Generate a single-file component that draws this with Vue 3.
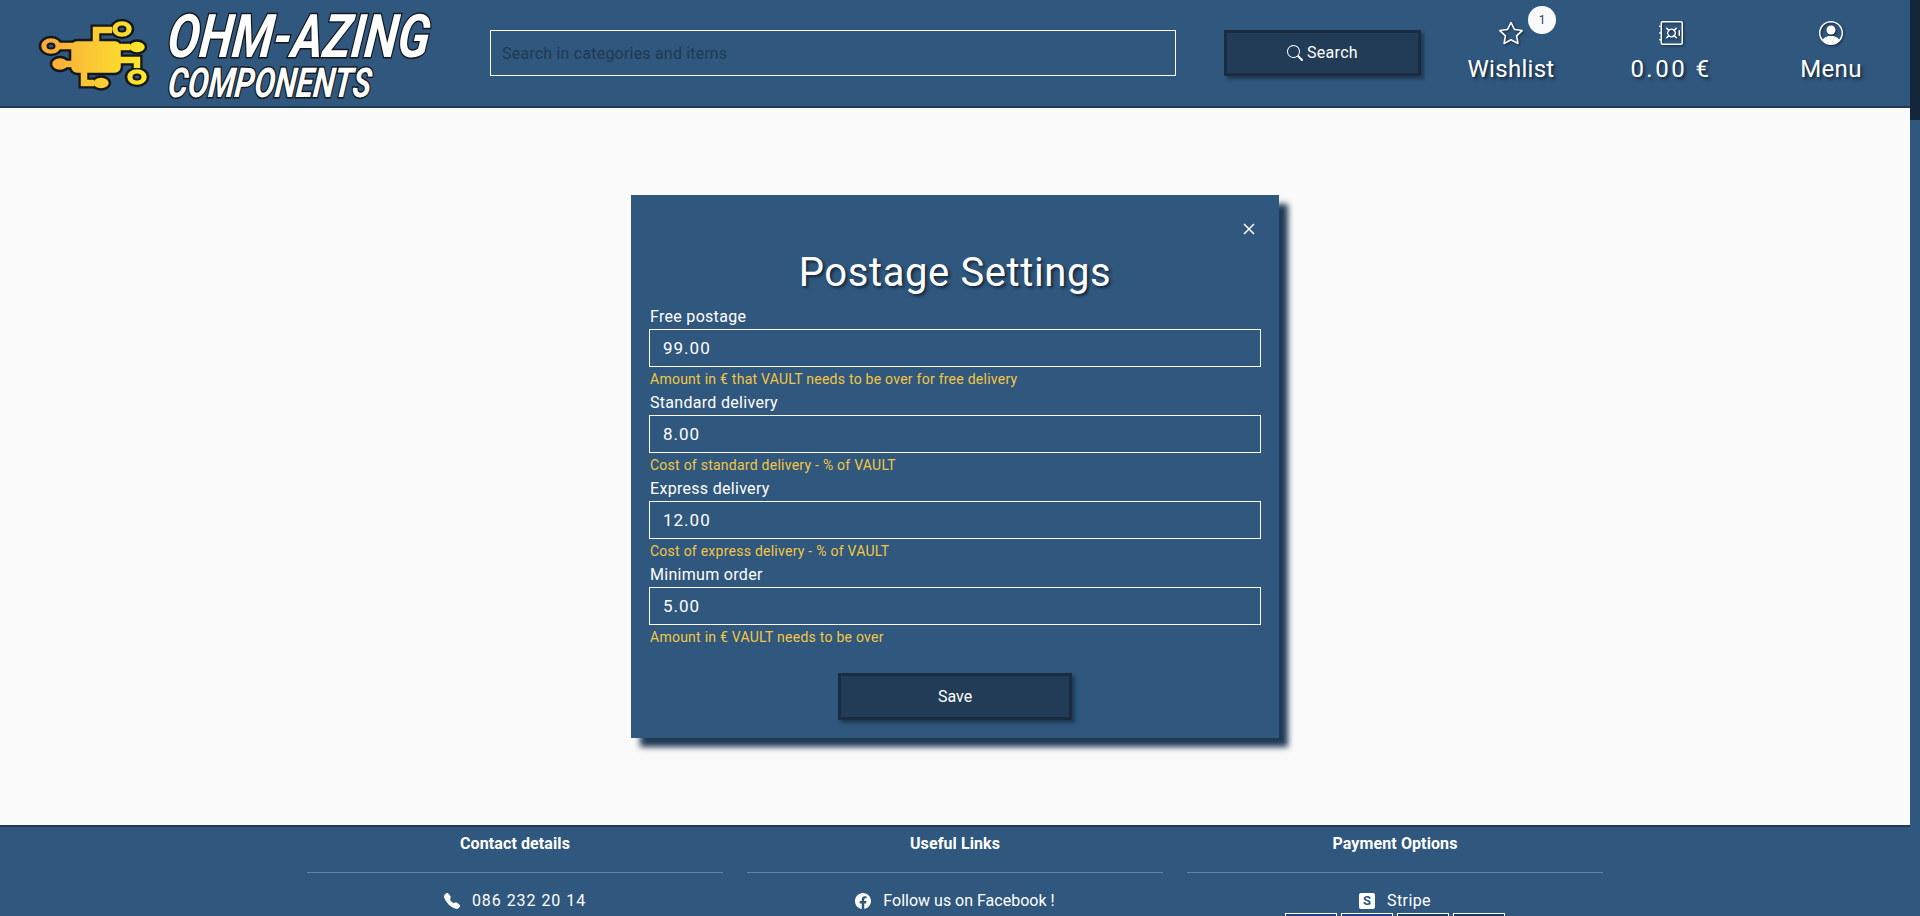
<script setup>
const fields = [
  { label: 'Free postage', value: '99.00', help: 'Amount in € that VAULT needs to be over for free delivery' },
  { label: 'Standard delivery', value: '8.00', help: 'Cost of standard delivery - % of VAULT' },
  { label: 'Express delivery', value: '12.00', help: 'Cost of express delivery - % of VAULT' },
  { label: 'Minimum order', value: '5.00', help: 'Amount in € VAULT needs to be over' },
]
</script>

<template>
  <div class="root">
    <div class="page">
      <header class="topbar">
        <svg class="logo" viewBox="0 0 490 106" width="490" height="106">
          <defs>
            <linearGradient id="chip" gradientUnits="userSpaceOnUse" x1="42" y1="0" x2="146" y2="0">
              <stop offset="0" stop-color="#f9a83c" />
              <stop offset="1" stop-color="#fde92b" />
            </linearGradient>
          </defs>
          <g fill="none" stroke="#14171c" stroke-width="11">
            <path d="M96 42V30H112M60 46H74M122 47H130M122 60H137V68M84 72V83H94M62 64H72" />
          </g>
          <g fill="url(#chip)" stroke="#14171c" stroke-width="2.5">
            <ellipse cx="122" cy="29" rx="11" ry="9" />
            <ellipse cx="51" cy="46" rx="11" ry="9" />
            <ellipse cx="60" cy="64" rx="9" ry="7" />
            <ellipse cx="137" cy="47" rx="9" ry="6.5" />
            <ellipse cx="137" cy="77" rx="11" ry="9" />
            <ellipse cx="101" cy="83" rx="9" ry="6.5" />
            <rect x="70" y="40" width="52" height="34" rx="7" />
          </g>
          <g fill="none" stroke="url(#chip)" stroke-width="6.5">
            <path d="M96 44V30H112M60 46H76M120 47H130M118 60H137V68M84 70V83H94M62 64H74" />
          </g>
          <g fill="#30577d" stroke="#14171c" stroke-width="2">
            <ellipse cx="122" cy="29" rx="3.5" ry="2.5" />
            <ellipse cx="51" cy="46" rx="3.5" ry="2.5" />
            <ellipse cx="137" cy="77" rx="3.5" ry="2.5" />
          </g>
          <text class="logo-big" transform="translate(166 57) skewX(-6)" textLength="262" lengthAdjust="spacingAndGlyphs">OHM-AZING</text>
          <text class="logo-small" transform="translate(167 97) skewX(-6)" textLength="203" lengthAdjust="spacingAndGlyphs">COMPONENTS</text>
        </svg>
        <input class="search-input" type="text" placeholder="Search in categories and items" />
        <button class="btn search-btn">
          <svg viewBox="0 0 16 16" width="16" height="16" fill="currentColor">
            <path d="M11.742 10.344a6.5 6.5 0 1 0-1.397 1.398h-.001c.03.04.062.078.098.115l3.85 3.85a1 1 0 0 0 1.415-1.414l-3.85-3.85a1.007 1.007 0 0 0-.115-.1zM12 6.5a5.5 5.5 0 1 1-11 0 5.5 5.5 0 0 1 11 0z" />
          </svg>
          Search
        </button>
        <nav class="nav">
          <a class="nav-item">
            <span class="badge">1</span>
            <svg viewBox="0 0 16 16" width="24" height="24" fill="currentColor">
              <path d="M2.866 14.85c-.078.444.36.791.746.593l4.39-2.256 4.389 2.256c.386.198.824-.149.746-.592l-.83-4.73 3.522-3.356c.33-.314.16-.888-.282-.95l-4.898-.696L8.465.792a.513.513 0 0 0-.927 0L5.354 5.12l-4.898.696c-.441.062-.612.636-.283.95l3.523 3.356-.83 4.73zm4.905-2.767-3.686 1.894.694-3.957a.565.565 0 0 0-.163-.505L1.71 6.745l4.052-.576a.525.525 0 0 0 .393-.288L8 2.223l1.847 3.658a.525.525 0 0 0 .393.288l4.052.575-2.906 2.77a.565.565 0 0 0-.163.506l.694 3.957-3.686-1.894a.503.503 0 0 0-.461 0z" />
            </svg>
            <span>Wishlist</span>
          </a>
          <a class="nav-item">
            <svg viewBox="0 0 16 16" width="24" height="24" fill="currentColor">
              <path d="M1 1.5A1.5 1.5 0 0 1 2.5 0h12A1.5 1.5 0 0 1 16 1.5v13a1.5 1.5 0 0 1-1.5 1.5h-12A1.5 1.5 0 0 1 1 14.5V13H.5a.5.5 0 0 1 0-1H1V8.5H.5a.5.5 0 0 1 0-1H1V4H.5a.5.5 0 0 1 0-1H1V1.5zM2.5 1a.5.5 0 0 0-.5.5v13a.5.5 0 0 0 .5.5h12a.5.5 0 0 0 .5-.5v-13a.5.5 0 0 0-.5-.5h-12z" />
              <path d="M13.5 6a.5.5 0 0 1 .5.5v3a.5.5 0 0 1-1 0v-3a.5.5 0 0 1 .5-.5zM4.828 4.464a.5.5 0 0 1 .708 0l1.09 1.09a3.003 3.003 0 0 1 3.476 0l1.09-1.09a.5.5 0 1 1 .707.708l-1.09 1.09c.74 1.037.74 2.44 0 3.476l1.09 1.09a.5.5 0 1 1-.707.708l-1.09-1.09a3.002 3.002 0 0 1-3.476 0l-1.09 1.09a.5.5 0 1 1-.708-.708l1.09-1.09a3.002 3.002 0 0 1 0-3.476l-1.09-1.09a.5.5 0 0 1 0-.708zM6.95 6.586a2 2 0 1 0 2.828 2.828A2 2 0 0 0 6.95 6.586z" />
            </svg>
            <span class="price">0.00 €</span>
          </a>
          <a class="nav-item">
            <svg viewBox="0 0 16 16" width="24" height="24" fill="currentColor">
              <path d="M11 6a3 3 0 1 1-6 0 3 3 0 0 1 6 0z" />
              <path fill-rule="evenodd" d="M0 8a8 8 0 1 1 16 0A8 8 0 0 1 0 8zm8-7a7 7 0 0 0-5.468 11.37C3.242 11.226 4.805 10 8 10s4.757 1.225 5.468 2.37A7 7 0 0 0 8 1z" />
            </svg>
            <span>Menu</span>
          </a>
        </nav>
      </header>

      <main class="content">
        <div class="modal">
          <div class="modal-top">
            <button class="close" aria-label="Close">
              <svg viewBox="0 0 12 12" width="12" height="12" fill="none" stroke="currentColor" stroke-width="1.5">
                <path d="M1 1l10 10M11 1L1 11" />
              </svg>
            </button>
          </div>
          <h2 class="title">Postage Settings</h2>
          <div v-for="f in fields" :key="f.label" class="field">
            <label class="field-label">{{ f.label }}</label>
            <input class="field-input" type="text" :value="f.value" />
            <small class="field-help">{{ f.help }}</small>
          </div>
          <div class="actions">
            <button class="btn save-btn">Save</button>
          </div>
        </div>
      </main>

      <footer class="footer">
        <div class="footer-grid">
          <div class="footer-col">
            <h5 class="footer-title">Contact details</h5>
            <hr class="footer-line" />
            <div class="footer-row phone">
              <svg viewBox="0 0 16 16" width="16" height="16" fill="currentColor">
                <path fill-rule="evenodd" d="M1.885.511a1.745 1.745 0 0 1 2.61.163L6.29 2.98c.329.423.445.974.315 1.494l-.547 2.19a.678.678 0 0 0 .178.643l2.457 2.457a.678.678 0 0 0 .644.178l2.189-.547a1.745 1.745 0 0 1 1.494.315l2.306 1.794c.829.645.905 1.87.163 2.611l-1.034 1.034c-.74.74-1.846 1.065-2.877.702a18.634 18.634 0 0 1-7.01-4.42 18.634 18.634 0 0 1-4.42-7.009c-.362-1.03-.037-2.137.703-2.877L1.885.511z" />
              </svg>
              <span>086 232 20 14</span>
            </div>
          </div>
          <div class="footer-col">
            <h5 class="footer-title">Useful Links</h5>
            <hr class="footer-line" />
            <div class="footer-row facebook">
              <svg viewBox="0 0 16 16" width="16" height="16" fill="currentColor">
                <path d="M16 8.049c0-4.446-3.582-8.05-8-8.05C3.58 0-.002 3.603-.002 8.05c0 4.017 2.926 7.347 6.75 7.951v-5.625h-2.03V8.05H6.75V6.275c0-2.017 1.195-3.131 3.022-3.131.876 0 1.791.157 1.791.157v1.98h-1.009c-.993 0-1.303.621-1.303 1.258v1.51h2.218l-.354 2.326H9.25V16c3.824-.604 6.75-3.934 6.75-7.951z" />
              </svg>
              <span>Follow us on Facebook !</span>
            </div>
          </div>
          <div class="footer-col">
            <h5 class="footer-title">Payment Options</h5>
            <hr class="footer-line" />
            <div class="footer-row">
              <span class="stripe-icon">S</span>
              <span>Stripe</span>
            </div>
            <div class="cards">
              <span class="card card-a"></span>
              <span class="card card-a"></span>
              <span class="card card-b"></span>
              <span class="card card-b"></span>
            </div>
          </div>
        </div>
      </footer>
    </div>
    <div class="scroll-track"><div class="scroll-thumb"></div></div>
  </div>
</template>

<style>
html, body {
  margin: 0;
  overflow: hidden;
}
</style>

<style scoped>
.root {
  display: flex;
  height: 916px;
  overflow: hidden;
  font-family: Roboto, "Liberation Sans", sans-serif;
  color: #fff;
}
.page {
  flex: 1;
  min-width: 0;
  display: flex;
  flex-direction: column;
  overflow: hidden;
}
.scroll-track {
  width: 10px;
  flex: none;
  display: flex;
  background: #14263a;
}
.scroll-thumb {
  flex: 1;
  margin-top: 120px;
  background: #30577d;
}

.topbar {
  height: 106px;
  flex: none;
  display: flex;
  align-items: center;
  background: #30577d;
  border-bottom: 2px solid #203a55;
}
.logo {
  flex: none;
  display: block;
}
.logo-big,
.logo-small {
  font-family: Roboto, sans-serif;
  font-style: italic;
  font-weight: 700;
  fill: #fff;
  stroke: #14171c;
  stroke-width: 3px;
  paint-order: stroke;
}
.logo-big {
  font-size: 60px;
}
.logo-small {
  font-size: 41px;
}
.search-input {
  flex: none;
  width: 686px;
  height: 46px;
  box-sizing: border-box;
  padding: 0 11px;
  background: transparent;
  border: 1px solid #fff;
  border-radius: 0;
  outline: none;
  font: 16px Roboto, sans-serif;
  letter-spacing: 0.2px;
}
.search-input::placeholder {
  color: #1f3a55;
  opacity: 1;
}
.btn {
  background: #223c57;
  border: 3px solid #1a2c41;
  border-radius: 0;
  color: #fff;
  font: 16px Roboto, sans-serif;
  box-shadow: 3px 3px 3px #1f3a54;
}
.search-btn {
  flex: none;
  width: 197px;
  height: 46px;
  margin-left: 48px;
  padding-bottom: 2px;
  display: flex;
  align-items: center;
  justify-content: center;
  gap: 4px;
  letter-spacing: 0.3px;
}
.nav {
  flex: none;
  display: flex;
  margin-left: 10px;
}
.nav-item {
  position: relative;
  width: 160px;
  display: flex;
  flex-direction: column;
  align-items: center;
  gap: 10px;
  margin-top: -2px;
  font-size: 24px;
  line-height: 28px;
  letter-spacing: 0.3px;
  text-shadow: 2px 2px 3px #14263a;
}
.nav-item svg {
  filter: drop-shadow(1px 1px 1px #14263a);
}
.price {
  letter-spacing: 2.5px;
}
.badge {
  position: absolute;
  top: -15px;
  left: 97px;
  width: 28px;
  height: 28px;
  border-radius: 50%;
  background: #fafafa;
  color: #30405a;
  font-size: 12px;
  line-height: 28px;
  letter-spacing: 0;
  text-align: center;
  text-shadow: none;
}

.content {
  flex: 1;
  min-height: 0;
  display: flex;
  align-items: center;
  justify-content: center;
  background: #fafafa;
}
.modal {
  width: 648px;
  height: 543px;
  box-sizing: border-box;
  padding: 26px 18px 18px;
  background: #30577d;
  box-shadow: 9px 9px 6px #203a55;
}
.modal-top {
  display: flex;
  justify-content: flex-end;
  height: 14px;
  margin-bottom: 14px;
}
.close {
  padding: 0;
  margin-right: 6px;
  width: 12px;
  height: 14px;
  background: none;
  border: none;
  color: #fff;
}
.close svg {
  display: block;
  margin-top: 1px;
}
.title {
  margin: 0 0 7px;
  font-size: 40px;
  font-weight: 400;
  line-height: 48px;
  letter-spacing: 0.6px;
  text-align: center;
  text-shadow: 2px 2px 3px #14263a;
}
.field {
  display: flex;
  flex-direction: column;
  height: 86px;
}
.field-label {
  flex: none;
  height: 25px;
  padding-left: 1px;
  font-size: 16px;
  line-height: 26px;
  letter-spacing: 0.3px;
}
.field-input {
  flex: none;
  height: 38px;
  box-sizing: border-box;
  padding: 0 13px;
  background: transparent;
  border: 1px solid #fff;
  border-radius: 0;
  outline: none;
  color: #fff;
  font: 17px Roboto, sans-serif;
  letter-spacing: 1px;
}
.field-help {
  flex: none;
  height: 23px;
  padding-left: 1px;
  font-size: 14px;
  line-height: 25px;
  letter-spacing: 0.25px;
  color: #f2c744;
}
.actions {
  display: flex;
  justify-content: center;
  margin-top: 25px;
}
.save-btn {
  width: 234px;
  height: 47px;
}

.footer {
  height: 91px;
  flex: none;
  box-sizing: border-box;
  overflow: hidden;
  background: #30577d;
  border-top: 2px solid #203a55;
}
.footer-grid {
  width: 1320px;
  margin: 0 auto;
  display: grid;
  grid-template-columns: repeat(3, 1fr);
}
.footer-col {
  padding: 0 12px;
  text-align: center;
}
.footer-title {
  margin: 0;
  height: 34px;
  font-size: 16px;
  font-weight: 700;
  line-height: 34px;
  letter-spacing: 0.1px;
}
.footer-line {
  margin: 11px 0 0;
  border: 0;
  border-top: 1px solid rgba(255, 255, 255, 0.27);
}
.footer-row {
  margin-top: 16px;
  height: 24px;
  display: flex;
  align-items: center;
  justify-content: center;
  gap: 12px;
  font-size: 16px;
  line-height: 24px;
  letter-spacing: 0.4px;
}
.footer-row.phone {
  letter-spacing: 0.95px;
}
.footer-row.facebook {
  letter-spacing: 0;
}
.stripe-icon {
  width: 16px;
  height: 16px;
  border-radius: 2px;
  background: #fff;
  color: #30577d;
  font-size: 13px;
  font-weight: 700;
  line-height: 16px;
  letter-spacing: 0;
}
.cards {
  display: flex;
  justify-content: center;
  gap: 4px;
}
.card {
  width: 52px;
  height: 30px;
  box-sizing: border-box;
  border: 1px solid #fff;
}
.card-a {
  background: #1f3f8f;
}
.card-b {
  background: #153a66;
}
</style>
